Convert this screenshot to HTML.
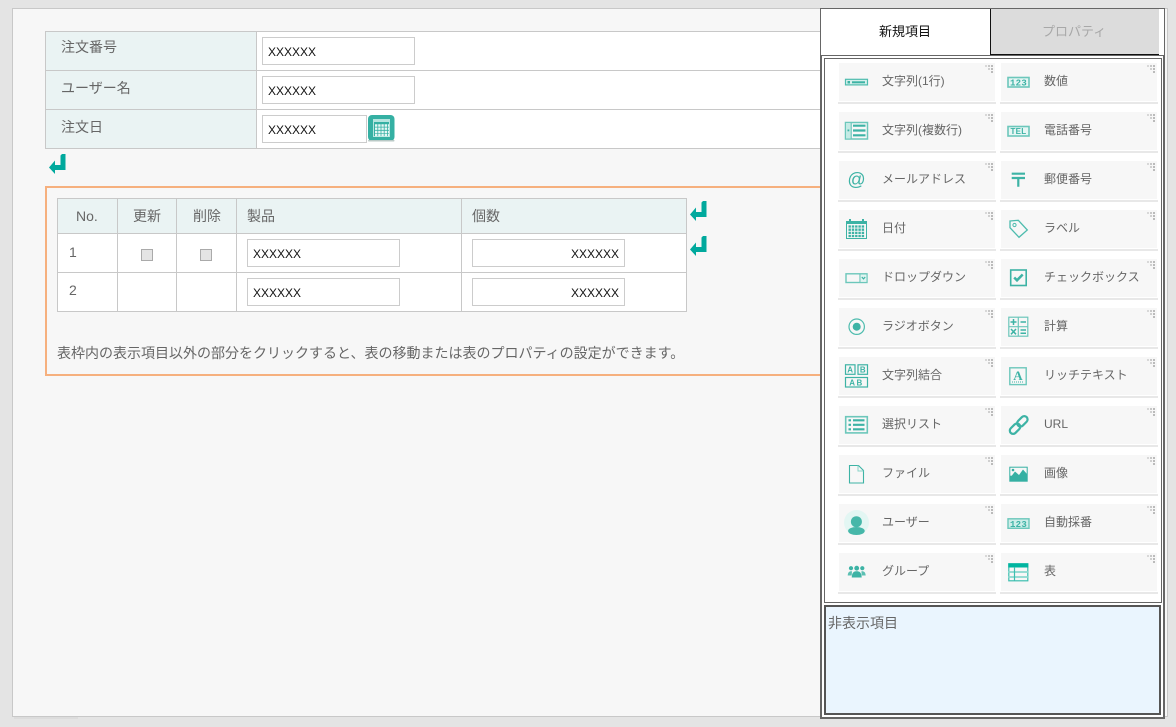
<!DOCTYPE html>
<html lang="ja"><head><meta charset="utf-8"><title>フォーム</title>
<style>
html,body{margin:0;padding:0;width:1176px;height:727px;overflow:hidden;background:#e4e4e4}
body{position:relative;font-family:"Liberation Sans","Noto Sans CJK JP",sans-serif;color:#666;font-size:14px}
div,span,svg{position:absolute;box-sizing:border-box}
.canvas{left:12px;top:8px;width:1156px;height:709px;background:#f7f7f7;border:1px solid #c8c8c8}
.sh{left:14px;top:717px;width:64px;height:2px;background:#dcdcdc}
.b{background:#c8c8c8}
.lab{background:#eaf3f3}
.w{background:#fff}
.t{white-space:nowrap;line-height:20px;height:20px}
.in{height:28px;background:#fff;border:1px solid #ccc;color:#111;font-size:12px;line-height:28px;padding:0 5px;white-space:nowrap}
.r{text-align:right}
.cb{width:12px;height:12px;background:#e4e4e4;border:1px solid #aaa}
.it{width:156px;height:38px;background:#f7f7f7}
.it::before{content:"";position:absolute;left:-1px;top:39px;width:158px;height:2px;background:#e8e8e8}
.it::after{content:"";position:absolute;left:146px;top:2px;width:2px;height:2px;background:#d8d8d8;box-shadow:3px 0 #c8c8c8,6px 0 #bbb,3px 3px #d0d0d0,6px 3px #bbb,6px 6px #bbb}
.it span{left:43px;top:8px;line-height:20px;font-size:12px;white-space:nowrap;color:#666}
.it svg{left:0;top:0;overflow:visible}
</style></head><body>
<div class="canvas"></div><div class="sh"></div>

<!-- top form -->
<div class="lab" style="left:45px;top:31px;width:212px;height:118px"></div>
<div class="w" style="left:257px;top:31px;width:570px;height:118px"></div>
<div class="b" style="left:45px;top:31px;width:780px;height:1px"></div>
<div class="b" style="left:45px;top:70px;width:780px;height:1px"></div>
<div class="b" style="left:45px;top:109px;width:780px;height:1px"></div>
<div class="b" style="left:45px;top:148px;width:780px;height:1px"></div>
<div class="b" style="left:45px;top:31px;width:1px;height:118px"></div>
<div class="b" style="left:256px;top:31px;width:1px;height:118px"></div>
<div class="t" style="left:61px;top:37px">注文番号</div>
<div class="t" style="left:61px;top:78px">ユーザー名</div>
<div class="t" style="left:61px;top:117px">注文日</div>
<div class="in" style="left:262px;top:37px;width:153px">XXXXXX</div>
<div class="in" style="left:262px;top:76px;width:153px">XXXXXX</div>
<div class="in" style="left:262px;top:115px;width:105px">XXXXXX</div>
<svg style="left:368px;top:115px" width="27" height="27" viewBox="0 0 27 27">
<rect x="0" y="0" width="26.5" height="26" rx="4" fill="#35b0a3"/>
<rect x="0" y="25" width="26.5" height="1.5" rx="0.7" fill="#b9c9c6"/>
<rect x="5.5" y="4.5" width="16" height="17" fill="none" stroke="#b5e5df"/>
<rect x="5" y="4" width="17" height="3" fill="#b5e5df"/>
<g stroke="#e6f7f5" stroke-width="2.4" stroke-dasharray="2.4 .8"><path d="M7 10.5H21M7 13.7H21M7 16.9H21M7 20H21"/></g>
</svg>
<svg style="left:49px;top:154px" width="18" height="21" viewBox="0 0 18 21"><path fill="#00a99d" d="M11.5 1.5L13 0H16.5V16H6V20L0 13.5L6 6.5V11H11.5Z"/></svg>

<!-- table frame -->
<div style="left:45px;top:186px;width:780px;height:190px;border:2px solid #f6b07e"></div>
<div class="lab" style="left:57px;top:198px;width:630px;height:35px"></div>
<div class="w" style="left:57px;top:233px;width:630px;height:78px"></div>
<div class="b" style="left:57px;top:198px;width:630px;height:1px"></div>
<div class="b" style="left:57px;top:233px;width:630px;height:1px"></div>
<div class="b" style="left:57px;top:272px;width:630px;height:1px"></div>
<div class="b" style="left:57px;top:311px;width:630px;height:1px"></div>
<div class="b" style="left:57px;top:198px;width:1px;height:114px"></div>
<div class="b" style="left:117px;top:198px;width:1px;height:114px"></div>
<div class="b" style="left:176px;top:198px;width:1px;height:114px"></div>
<div class="b" style="left:236px;top:198px;width:1px;height:114px"></div>
<div class="b" style="left:461px;top:198px;width:1px;height:114px"></div>
<div class="b" style="left:686px;top:198px;width:1px;height:114px"></div>
<div class="t" style="left:76px;top:206px">No.</div>
<div class="t" style="left:133px;top:206px">更新</div>
<div class="t" style="left:193px;top:206px">削除</div>
<div class="t" style="left:247px;top:206px">製品</div>
<div class="t" style="left:472px;top:206px">個数</div>
<div class="t" style="left:69px;top:242px">1</div>
<div class="t" style="left:69px;top:280px">2</div>
<div class="cb" style="left:141px;top:249px"></div>
<div class="cb" style="left:200px;top:249px"></div>
<div class="in" style="left:247px;top:239px;width:153px">XXXXXX</div>
<div class="in" style="left:247px;top:278px;width:153px">XXXXXX</div>
<div class="in r" style="left:472px;top:239px;width:153px">XXXXXX</div>
<div class="in r" style="left:472px;top:278px;width:153px">XXXXXX</div>
<svg style="left:690px;top:201px" width="18" height="21" viewBox="0 0 18 21"><path fill="#00a99d" d="M11.5 1.5L13 0H16.5V16H6V20L0 13.5L6 6.5V11H11.5Z"/></svg>
<svg style="left:690px;top:236px" width="18" height="21" viewBox="0 0 18 21"><path fill="#00a99d" d="M11.5 1.5L13 0H16.5V16H6V20L0 13.5L6 6.5V11H11.5Z"/></svg>
<div class="t" style="left:57px;top:343px">表枠内の表示項目以外の部分をクリックすると、表の移動または表のプロパティの設定ができます。</div>

<!-- panel -->
<div class="w" style="left:820px;top:8px;width:345px;height:711px;border:1px solid #666;border-bottom-width:2px"></div>
<div style="left:821px;top:56px;width:1px;height:662px;background:#666"></div>
<div style="left:1163px;top:56px;width:1px;height:662px;background:#666"></div>
<div style="left:991px;top:9px;width:168px;height:46px;background:#dcdcdc;border-bottom:1px solid #111"></div>
<div style="left:990px;top:9px;width:1px;height:46px;background:#111"></div>
<div style="left:821px;top:55px;width:343px;height:1px;background:#666"></div>
<div class="t" style="left:879px;top:22px;font-size:13px;color:#111">新規項目</div>
<div class="t" style="left:1042px;top:22px;font-size:13px;color:#a8a8a8">プロパティ</div>
<div style="left:824px;top:58px;width:338px;height:545px;border:1px solid #666"></div>
<div style="left:824px;top:605px;width:337px;height:110px;background:#eaf5fe;border:2px solid #555"></div>
<div class="t" style="left:828px;top:613px">非表示項目</div>

<div class="it" style="left:839px;top:63px"><span>文字列(1行)</span><svg width="42" height="38"><rect x="6.5" y="16.3" width="22" height="5.6" fill="#d6f0ec" stroke="#4ebcae" stroke-width="1.2"/><rect x="8.5" y="18" width="2.5" height="2.5" fill="#3db3a5"/><rect x="13" y="18.3" width="13" height="2" fill="#3db3a5"/></svg></div>
<div class="it" style="left:1001px;top:63px"><span>数値</span><svg width="42" height="38"><rect x="7" y="14.5" width="21" height="9.5" fill="#e6f6f4" stroke="#6cc7bb" stroke-width="1.6"/><text x="17.5" y="22.3" font-family="Liberation Mono" font-size="9" font-weight="bold" fill="#3db3a5" text-anchor="middle" letter-spacing=".3">123</text></svg></div>

<div class="it" style="left:839px;top:112px"><span>文字列(複数行)</span><svg width="42" height="38"><rect x="6.5" y="10.5" width="22" height="16.5" fill="none" stroke="#6cc7bb" stroke-width="1.5"/><rect x="7" y="11" width="4.5" height="15.5" fill="#c4ebe5"/><rect x="11.6" y="10.5" width="1.2" height="16.5" fill="#6cc7bb"/><rect x="8.5" y="17.5" width="1.8" height="1.8" fill="#3db3a5"/><path d="M14 13.7H26.5M14 18.5H26.5M14 23.3H26.5" stroke="#3db3a5" stroke-width="2.2"/></svg></div>
<div class="it" style="left:1001px;top:112px"><span>電話番号</span><svg width="42" height="38"><rect x="7" y="14.5" width="21" height="9.5" fill="#e6f6f4" stroke="#6cc7bb" stroke-width="1.6"/><text x="17.5" y="22.2" font-family="Liberation Sans" font-size="8" font-weight="bold" fill="#3db3a5" text-anchor="middle" letter-spacing=".3">TEL</text></svg></div>

<div class="it" style="left:839px;top:161px"><span>メールアドレス</span><svg width="42" height="38"><text x="17.5" y="24.5" font-family="Liberation Sans" font-size="18" fill="#3db3a5" text-anchor="middle">@</text></svg></div>
<div class="it" style="left:1001px;top:161px"><span>郵便番号</span><svg width="42" height="38"><path d="M10.7 12.7H24M10.7 17H24M17.3 17V25.7" fill="none" stroke="#3db3a5" stroke-width="2.2"/></svg></div>

<div class="it" style="left:839px;top:210px"><span>日付</span><svg width="42" height="38"><rect x="7.5" y="11.5" width="20" height="17" fill="none" stroke="#3db3a5"/><rect x="7" y="11" width="21" height="3" fill="#3db3a5"/><rect x="10" y="9" width="2" height="3" fill="#3db3a5"/><rect x="23" y="9" width="2" height="3" fill="#3db3a5"/><path d="M9.5 16.5H26M9.5 19.7H26M9.5 22.9H26M9.5 26H26" stroke="#3db3a5" stroke-width="2.3" stroke-dasharray="2.4 .9"/></svg></div>
<div class="it" style="left:1001px;top:210px"><span>ラベル</span><svg width="42" height="38"><path d="M9 11L17.3 10.3L26.3 20L18 27.3L9 17.7Z" fill="none" stroke="#4ebcae" stroke-width="1.3"/><circle cx="13.5" cy="15" r="1.6" fill="none" stroke="#4ebcae"/></svg></div>

<div class="it" style="left:839px;top:259px"><span>ドロップダウン</span><svg width="42" height="38"><rect x="7" y="14.8" width="21" height="8.7" fill="none" stroke="#6cc7bb" stroke-width="1.4"/><path d="M21 14.8V23.5" stroke="#6cc7bb" stroke-width="1.2"/><rect x="21.5" y="15.5" width="6" height="7.3" fill="#e0f4f1"/><path d="M22.8 18L24.5 19.9L26.2 18" fill="none" stroke="#3db3a5" stroke-width="1.2"/></svg></div>
<div class="it" style="left:1001px;top:259px"><span>チェックボックス</span><svg width="42" height="38"><rect x="9.7" y="11" width="15.5" height="15.5" fill="none" stroke="#3db3a5" stroke-width="1.6"/><path d="M13.2 18.5L16 21.3L21.7 15.5" fill="none" stroke="#3db3a5" stroke-width="2.5"/></svg></div>

<div class="it" style="left:839px;top:308px"><span>ラジオボタン</span><svg width="42" height="38"><circle cx="17.7" cy="18.7" r="7.7" fill="none" stroke="#4ebcae" stroke-width="1.2"/><circle cx="17.7" cy="18.7" r="4" fill="#3db3a5"/></svg></div>
<div class="it" style="left:1001px;top:308px"><span>計算</span><svg width="42" height="38"><rect x="7.8" y="9.2" width="19" height="19" fill="none" stroke="#6cc7bb" stroke-width="1.2"/><path d="M17.3 9V28.5M7.5 18.7H27" stroke="#6cc7bb" stroke-width="1.2"/><path d="M9.5 14H15.5M12.5 11V17M19.5 14H25M10 21L15 26.3M15 21L10 26.3M19.5 22H25M19.5 25.3H25" fill="none" stroke="#3db3a5" stroke-width="1.5"/></svg></div>

<div class="it" style="left:839px;top:357px"><span>文字列結合</span><svg width="42" height="38"><rect x="6.5" y="7.8" width="9.5" height="9.5" fill="none" stroke="#3db3a5" stroke-width="1.2"/><rect x="19" y="7.8" width="9.5" height="9.5" fill="none" stroke="#3db3a5" stroke-width="1.2"/><rect x="6.5" y="20.5" width="22" height="9.5" fill="none" stroke="#3db3a5" stroke-width="1.2"/><text x="11.2" y="15.7" font-family="Liberation Sans" font-size="8" font-weight="bold" fill="#3db3a5" text-anchor="middle">A</text><text x="23.8" y="15.7" font-family="Liberation Sans" font-size="8" font-weight="bold" fill="#3db3a5" text-anchor="middle">B</text><text x="17.5" y="28.4" font-family="Liberation Sans" font-size="8" font-weight="bold" fill="#3db3a5" text-anchor="middle" letter-spacing="1.5">AB</text></svg></div>
<div class="it" style="left:1001px;top:357px"><span>リッチテキスト</span><svg width="42" height="38"><rect x="8.8" y="10.8" width="16.4" height="16.8" fill="none" stroke="#6cc7bb" stroke-width="1.4"/><text x="17" y="23" font-family="Liberation Serif" font-size="13" font-weight="bold" fill="#3db3a5" text-anchor="middle">A</text><path d="M11 25H23" stroke="#3db3a5" stroke-dasharray="1 1"/></svg></div>

<div class="it" style="left:839px;top:406px"><span>選択リスト</span><svg width="42" height="38"><rect x="6.7" y="10.7" width="21.6" height="16.2" fill="none" stroke="#6cc7bb" stroke-width="1.6"/><path d="M9.5 14.3H12M9.5 18.8H12M9.5 23.3H12M14 14.3H25.5M14 18.8H25.5M14 23.3H25.5" stroke="#3db3a5" stroke-width="2.1"/></svg></div>
<div class="it" style="left:1001px;top:406px"><span>URL</span><svg width="42" height="38"><g transform="rotate(-45 17.7 19)" fill="none" stroke="#3db3a5" stroke-width="2.2"><rect x="6.5" y="15.7" width="12" height="6.6" rx="3.3"/><rect x="16.9" y="15.7" width="12" height="6.6" rx="3.3"/></g></svg></div>

<div class="it" style="left:839px;top:455px"><span>ファイル</span><svg width="42" height="38"><path d="M10.5 10.5H19.5L24.5 15.5V28H10.5Z" fill="none" stroke="#3db3a5" stroke-width="1.1"/><path d="M19 10.5V16H24.5" fill="none" stroke="#8ad4ca"/></svg></div>
<div class="it" style="left:1001px;top:455px"><span>画像</span><svg width="42" height="38"><rect x="8.3" y="11.7" width="18.4" height="15" fill="#35b0a3"/><rect x="9.3" y="12.7" width="16.4" height="8" fill="#f7f7f7"/><path d="M9 23L14 16.5L18 20L22 14.5L26 19V24H9Z" fill="#35b0a3"/><circle cx="12" cy="15" r="1.3" fill="#35b0a3"/></svg></div>

<div class="it" style="left:839px;top:504px"><span>ユーザー</span><svg width="42" height="38"><circle cx="17.5" cy="18.5" r="12.5" fill="#e3f6f3"/><circle cx="17.4" cy="17.7" r="5.5" fill="#46b7a9"/><ellipse cx="17.4" cy="27" rx="8.3" ry="4" fill="#46b7a9"/></svg></div>
<div class="it" style="left:1001px;top:504px"><span>自動採番</span><svg width="42" height="38"><rect x="7" y="14.8" width="21" height="9.5" fill="#cdeee9" stroke="#6cc7bb" stroke-width="1.4"/><text x="17.5" y="22.8" font-family="Liberation Mono" font-size="9" font-weight="bold" fill="#3db3a5" text-anchor="middle" letter-spacing=".3">123</text></svg></div>

<div class="it" style="left:839px;top:553px"><span>グループ</span><svg width="42" height="38"><circle cx="12" cy="15.2" r="2.1" fill="#3db3a5"/><circle cx="23.3" cy="15.2" r="2.1" fill="#3db3a5"/><circle cx="17.7" cy="15.2" r="2.4" fill="#3db3a5"/><path d="M8.7 22.5C9 18.5 11 18 13 18.3L12.7 22.5ZM26.7 22.5C26.4 18.5 24.4 18 22.4 18.3L22.7 22.5Z" fill="#5cc0b3"/><path d="M12.7 24.5C13 19 15 18.2 17.7 18.2S22.4 19 22.7 24.5Z" fill="#3db3a5"/></svg></div>
<div class="it" style="left:1001px;top:553px"><span>表</span><svg width="42" height="38"><rect x="7.8" y="10.8" width="19" height="17" fill="none" stroke="#3dbfb0" stroke-width="1.2"/><rect x="7.3" y="10.3" width="20" height="4.2" fill="#00b5a0"/><path d="M7.5 19H27M7.5 24H27" stroke="#8ad9cf" stroke-width="1.7"/><path d="M13.5 14V28" stroke="#3dbfb0" stroke-width="1.2"/></svg></div>
</body></html>
